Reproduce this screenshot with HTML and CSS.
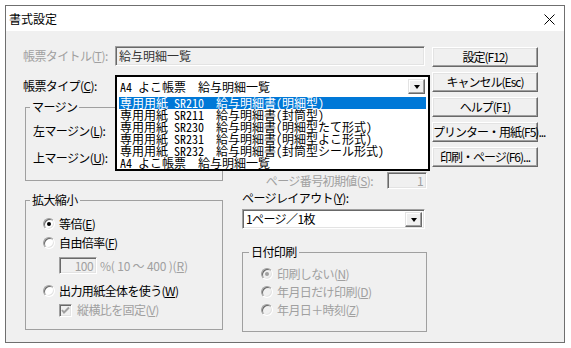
FILE: index.html
```html
<!DOCTYPE html>
<html lang="ja">
<head>
    <meta charset="UTF-8">
    <title>書式設定</title>
    <link rel="stylesheet" href="styles.css">
</head>
<body>

    <div class="window">
        <div class="titlebar">
            <span class="title">書式設定</span>
            <svg class="close" width="11" height="11" viewBox="0 0 11 11">
                <path d="M0.5 0.5 L10.5 10.5 M10.5 0.5 L0.5 10.5" stroke="#000" stroke-width="1" fill="none"/>
            </svg>
        </div>

        <div class="client">
            <div class="main">
                <div class="row">
                    <span class="lbl disabled">帳票タイトル(<u>T</u>):</span>
                    <div class="edit readonly title-edit">給与明細一覧</div>
                </div>

                <div class="row row-type">
                    <span class="lbl">帳票タイプ(<u>C</u>):</span>
                    <div class="type-combo">
                        <span class="combo-text">A4 よこ帳票  給与明細一覧</span>
                        <span class="drop-btn"><i class="tri"></i></span>
                        <ul class="droplist">
                            <li class="selected">専用用紙 SR210  給与明細書(明細型)</li>
                            <li>専用用紙 SR211  給与明細書(封筒型)</li>
                            <li>専用用紙 SR230  給与明細書(明細型たて形式)</li>
                            <li>専用用紙 SR231  給与明細書(明細型よこ形式)</li>
                            <li>専用用紙 SR232  給与明細書(封筒型シール形式)</li>
                            <li>A4 よこ帳票  給与明細一覧</li>
                        </ul>
                    </div>
                </div>

                <div class="columns">
                    <div class="col-left">
                        <fieldset class="group group-margin">
                            <legend>マージン</legend>
                            <div class="margin-row">左マージン(<u>L</u>):</div>
                            <div class="margin-row">上マージン(<u>U</u>):</div>
                        </fieldset>

                        <fieldset class="group group-scale">
                            <legend>拡大縮小</legend>
                            <div class="opt opt-first"><span class="radio checked"></span>等倍(<u>E</u>)</div>
                            <div class="opt"><span class="radio"></span>自由倍率(<u>F</u>)</div>
                            <div class="ratio-row disabled">
                                <div class="edit small-edit">100</div>
                                <span class="range">%( 10 〜 400 )(<u>R</u>)</span>
                            </div>
                            <div class="opt opt-whole"><span class="radio"></span>出力用紙全体を使う(<u>W</u>)</div>
                            <div class="opt opt-check disabled">
                                <span class="checkbox">
                                    <svg width="9" height="9" viewBox="0 0 9 9">
                                        <path d="M1 4 L3 6.5 L8 1.5" stroke="#a0a0a0" stroke-width="2" fill="none"/>
                                    </svg>
                                </span>縦横比を固定(<u>V</u>)
                            </div>
                        </fieldset>
                    </div>

                    <div class="col-right">
                        <div class="pageno-row">
                            <span class="disabled">ページ番号初期値(<u>S</u>):</span>
                            <div class="edit pageno-edit disabled">1</div>
                        </div>

                        <div class="layout-label">ページレイアウト(<u>Y</u>):</div>
                        <div class="combo">
                            <span class="combo-text">1ページ／1枚</span>
                            <span class="drop-btn"><i class="tri"></i></span>
                        </div>

                        <fieldset class="group group-date">
                            <legend>日付印刷</legend>
                            <div class="opt disabled opt-first"><span class="radio checked"></span>印刷しない(<u>N</u>)</div>
                            <div class="opt disabled"><span class="radio"></span>年月日だけ印刷(<u>D</u>)</div>
                            <div class="opt disabled"><span class="radio"></span>年月日＋時刻(<u>Z</u>)</div>
                        </fieldset>
                    </div>
                </div>
            </div>

            <div class="buttons">
                <button class="btn">設定(F12)</button>
                <button class="btn">キャンセル(Esc)</button>
                <button class="btn">ヘルプ(F1)</button>
                <button class="btn">プリンター・用紙(F5)...</button>
                <button class="btn">印刷・ページ(F6)...</button>
            </div>
        </div>
    </div>

</body>
</html>
```

FILE: styles.css
```css
/* General */
body {
    margin: 0;
    background-color: #fff;
    font-family: "Noto Sans CJK JP", sans-serif;
    font-size: 12px;
    line-height: 14px;
    letter-spacing: -0.6px;
    color: #000;
}

u {
    text-decoration: underline;
    text-underline-offset: 1px;
}

.disabled {
    color: #a0a0a0;
}

/* Window frame */
.window {
    margin: 5px 0 0 5px;
    width: 558px;
    height: 336px;
    border: 1px solid #6f6f6f;
    background-color: #f0f0f0;
}

.titlebar {
    height: 25px;
    background-color: #fff;
    display: flex;
    align-items: center;
    justify-content: space-between;
    padding: 0 9px 0 3px;
    letter-spacing: 0;
}

.title {
    padding-top: 1px;
}

.close {
    display: block;
    margin-top: 1px;
}

.client {
    display: flex;
    padding: 15px 0 0 17px;
}

.main {
    width: 407px;
}

/* Edits and combos */
.edit {
    box-sizing: border-box;
    border: 1px solid;
    border-color: #a0a0a0 #fff #fff #a0a0a0;
    box-shadow: inset 1px 1px 0 #696969, inset -1px -1px 0 #e3e3e3;
    background-color: #fff;
    padding: 0 3px;
    white-space: pre;
}

.edit.readonly {
    background-color: #f0f0f0;
    color: #333;
    letter-spacing: 0;
}

.row {
    display: flex;
    align-items: center;
}

.lbl {
    width: 92px;
}

.title-edit {
    width: 310px;
    height: 20px;
    line-height: 18px;
}

.row-type {
    margin-top: 9px;
}

.drop-btn {
    box-sizing: border-box;
    width: 17px;
    height: 15px;
    border: 1px solid;
    border-color: #e3e3e3 #696969 #696969 #e3e3e3;
    box-shadow: inset -1px -1px 0 #a0a0a0, inset 1px 1px 0 #fff;
    background-color: #f0f0f0;
    display: flex;
    align-items: center;
    justify-content: center;
}

.tri {
    width: 0;
    height: 0;
    border-left: 3.5px solid transparent;
    border-right: 3.5px solid transparent;
    border-top: 4px solid #000;
    margin-top: 1px;
}

/* Open type combo with its list */
.type-combo {
    position: relative;
    z-index: 2;
    box-sizing: border-box;
    width: 315px;
    height: 21px;
    border: 2px solid #000;
    border-bottom: none;
    background-color: #fff;
    display: flex;
    align-items: center;
    justify-content: space-between;
    padding: 0 3px 0 3px;
}

.type-combo .combo-text,
.droplist li {
    white-space: pre;
    font-family: "Noto Sans Mono CJK JP", "Noto Sans CJK JP", monospace;
    letter-spacing: 0;
}

.droplist {
    position: absolute;
    top: 100%;
    left: -2px;
    right: -2px;
    margin: 0;
    padding: 0;
    list-style: none;
    background-color: #fff;
    border: 2px solid #000;
    border-top: none;
}

.droplist li {
    height: 12px;
    line-height: 12px;
    padding-left: 1px;
    margin: 0 2px;
}

.droplist li.selected {
    background-color: #0078d7;
    color: #fff;
    margin-top: 1px;
}

/* Columns */
.columns {
    display: flex;
    gap: 19px;
    padding-left: 2px;
    margin-top: 4px;
}

.col-left {
    width: 198px;
}

.col-right {
    width: 185px;
}

.group {
    margin: 0;
    padding: 0 4px;
    border: 1px solid #a0a0a0;
    box-sizing: border-box;
}

.group legend {
    padding: 0 2px;
    line-height: 14px;
}

.group-margin {
    height: 81px;
    padding-top: 3px;
}

.margin-row {
    height: 27px;
    line-height: 27px;
    padding-left: 3px;
}

.group-scale {
    height: 137px;
    margin-top: 12px;
}

/* Radios and checkbox */
.opt {
    display: flex;
    align-items: center;
    height: 18px;
    padding-left: 13px;
}

.group-scale .opt-first {
    margin-top: 8px;
}

.group-scale .opt + .opt {
    margin-top: 1px;
}

.radio {
    box-sizing: border-box;
    width: 12px;
    height: 12px;
    border-radius: 50%;
    background-color: #fff;
    border: 1px solid;
    border-color: #a0a0a0 #fff #fff #a0a0a0;
    box-shadow: inset 1px 1px 0 #696969, inset -1px -1px 0 #e3e3e3;
    margin-right: 4px;
    display: flex;
    align-items: center;
    justify-content: center;
}

.radio.checked::after {
    content: "";
    width: 4px;
    height: 4px;
    border-radius: 50%;
    background-color: #000;
}

.disabled .radio {
    background-color: #f0f0f0;
}

.disabled .radio.checked::after {
    background-color: #a0a0a0;
}

.ratio-row {
    display: flex;
    align-items: center;
    margin-top: 5px;
    padding-left: 29px;
    height: 17px;
}

.small-edit {
    width: 38px;
    height: 17px;
    line-height: 15px;
    text-align: right;
    background-color: #f0f0f0;
    margin-right: 3px;
}

.range {
    white-space: pre;
    letter-spacing: -0.2px;
}

.group-scale .opt-whole {
    margin-top: 8px;
}

.group-scale .opt-check {
    margin-top: 2px;
    padding-left: 29px;
}

.checkbox {
    box-sizing: border-box;
    width: 13px;
    height: 13px;
    border: 1px solid;
    border-color: #a0a0a0 #fff #fff #a0a0a0;
    box-shadow: inset 1px 1px 0 #696969, inset -1px -1px 0 #e3e3e3;
    background-color: #f0f0f0;
    margin-right: 5px;
    display: flex;
    align-items: center;
    justify-content: center;
}

.checkbox svg {
    display: block;
}

/* Right column */
.pageno-row {
    display: flex;
    align-items: center;
    justify-content: flex-end;
    margin-top: 72px;
    height: 17px;
}

.pageno-edit {
    width: 40px;
    height: 17px;
    line-height: 15px;
    text-align: right;
    background-color: #f0f0f0;
    margin-left: 14px;
}

.layout-label {
    margin-top: 2px;
    height: 14px;
}

.combo {
    box-sizing: border-box;
    margin-top: 4px;
    width: 183px;
    height: 20px;
    border: 1px solid;
    border-color: #a0a0a0 #fff #fff #a0a0a0;
    box-shadow: inset 1px 1px 0 #696969, inset -1px -1px 0 #e3e3e3;
    background-color: #fff;
    display: flex;
    align-items: center;
    justify-content: space-between;
    padding: 0 2px 0 3px;
}

.group-date {
    width: 185px;
    height: 87px;
    margin-top: 16px;
}

.group-date legend {
    margin-left: 2px;
}

.group-date .opt {
    padding-left: 14px;
}

.group-date .opt-first {
    margin-top: 6px;
}

/* Buttons */
.buttons {
    display: flex;
    flex-direction: column;
    gap: 5px;
    margin: 1px 0 0 2px;
}

.btn {
    box-sizing: border-box;
    width: 106px;
    height: 20px;
    padding: 0;
    font-family: "Noto Sans CJK JP", sans-serif;
    font-size: 12px;
    line-height: 14px;
    letter-spacing: -1px;
    color: #000;
    background-color: #f0f0f0;
    border: 1px solid;
    border-color: #fff #696969 #696969 #fff;
    box-shadow: inset -1px -1px 0 #a0a0a0, inset 1px 1px 0 #e3e3e3;
    white-space: nowrap;
}
```
